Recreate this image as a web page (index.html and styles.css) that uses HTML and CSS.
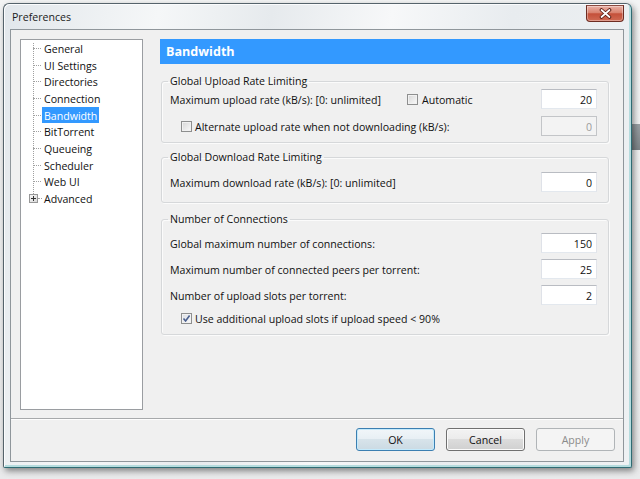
FILE: index.html
```html
<!DOCTYPE html>
<html lang="en">
<head>
    <meta charset="UTF-8">
    <meta name="viewport" content="width=device-width, initial-scale=1.0">
    <title>Preferences</title>
    <link rel="stylesheet" href="styles.css">
</head>
<body>

    <div class="behind"></div>

    <div class="window">
        <div class="titlebar">
            <span class="title">Preferences</span>
            <button class="close-btn" aria-label="Close">
                <svg width="13" height="11" viewBox="0 0 13 11">
                    <path d="M2.5 2 L10.5 9 M10.5 2 L2.5 9" stroke="#5b1d14" stroke-width="3.6" stroke-linecap="round"/>
                    <path d="M2.5 2 L10.5 9 M10.5 2 L2.5 9" stroke="#fff" stroke-width="1.7" stroke-linecap="round"/>
                </svg>
            </button>
        </div>

        <div class="client">
            <div class="main">
                <ul class="tree">
                    <li><span>General</span></li>
                    <li><span>UI Settings</span></li>
                    <li><span>Directories</span></li>
                    <li><span>Connection</span></li>
                    <li class="selected"><span>Bandwidth</span></li>
                    <li><span>BitTorrent</span></li>
                    <li><span>Queueing</span></li>
                    <li><span>Scheduler</span></li>
                    <li><span>Web UI</span></li>
                    <li class="expandable"><i class="expander"></i><span>Advanced</span></li>
                </ul>

                <div class="pane">
                    <div class="pane-title">Bandwidth</div>

                    <fieldset class="group group-upload">
                        <legend>Global Upload Rate Limiting</legend>
                        <div class="row row-auto">
                            <span class="text">Maximum upload rate (kB/s): [0: unlimited]</span>
                            <label class="check"><span class="box"></span><span class="text">Automatic</span></label>
                            <input class="field" type="text" value="20" readonly>
                        </div>
                        <div class="row">
                            <label class="check indent"><span class="box"></span><span class="text">Alternate upload rate when not downloading (kB/s):</span></label>
                            <input class="field" type="text" value="0" disabled>
                        </div>
                    </fieldset>

                    <fieldset class="group group-download">
                        <legend>Global Download Rate Limiting</legend>
                        <div class="row">
                            <span class="text">Maximum download rate (kB/s): [0: unlimited]</span>
                            <input class="field" type="text" value="0" readonly>
                        </div>
                    </fieldset>

                    <fieldset class="group group-connections">
                        <legend>Number of Connections</legend>
                        <div class="row">
                            <span class="text">Global maximum number of connections:</span>
                            <input class="field" type="text" value="150" readonly>
                        </div>
                        <div class="row">
                            <span class="text">Maximum number of connected peers per torrent:</span>
                            <input class="field" type="text" value="25" readonly>
                        </div>
                        <div class="row">
                            <span class="text">Number of upload slots per torrent:</span>
                            <input class="field" type="text" value="2" readonly>
                        </div>
                        <div class="row row-check">
                            <label class="check indent"><span class="box checked"></span><span class="text">Use additional upload slots if upload speed &lt; 90%</span></label>
                        </div>
                    </fieldset>
                </div>
            </div>

            <div class="footer">
                <button class="btn btn-default">OK</button>
                <button class="btn">Cancel</button>
                <button class="btn" disabled>Apply</button>
            </div>
        </div>
    </div>

</body>
</html>
```

FILE: styles.css
```css
* {
    box-sizing: border-box;
}
body {
    margin: 0;
    height: 479px;
    overflow: hidden;
    position: relative;
    background: linear-gradient(#f3f4f4, #e9eaeb);
    font-family: "Open Sans", "Noto Sans", sans-serif;
    font-size: 10.6px;
    color: #111;
}
.behind {
    position: absolute;
    left: 626px;
    top: 124px;
    width: 14px;
    height: 26px;
    background: linear-gradient(#9aa0a4, #7d8387);
}
.window {
    position: relative;
    margin: 3px 0 0 3px;
    width: 629px;
    height: 465px;
    display: flex;
    flex-direction: column;
    padding: 0 7px 5px 6px;
    border: 1px solid #55636b;
    border-right-color: #2f6b73;
    border-bottom-color: #2f6b73;
    border-radius: 6px 6px 2px 2px;
    background: linear-gradient(100deg, #e2e7eb 0%, #f5f7f8 22%, #e6eaed 38%, #f7f8f9 55%, #e8ecef 72%, #eef1f3 100%);
    box-shadow: inset 1px 1px 0 #fbfcfd, inset -2px -2px 0 #b5dcde, 2px 3px 6px rgba(0, 0, 0, 0.45);
}
.titlebar {
    height: 25px;
    display: flex;
    align-items: center;
    padding-left: 2px;
}
.title {
    font-size: 10.6px;
    color: #1b1b1b;
}
.close-btn {
    margin-left: auto;
    align-self: flex-start;
    margin-top: 1px;
    width: 38px;
    height: 17px;
    padding: 0;
    display: flex;
    align-items: center;
    justify-content: center;
    border: 1px solid #6d2c22;
    border-top-color: #8a4a40;
    border-radius: 0 0 4px 4px;
    background: linear-gradient(#eab1a6 0%, #d9826f 45%, #c4503a 52%, #cf6a53 100%);
    box-shadow: inset 0 0 0 1px rgba(255, 255, 255, 0.35);
}
.client {
    flex: 1;
    display: flex;
    flex-direction: column;
    background: #f0f0f0;
    border: 1px solid #8f969b;
}
.main {
    height: 388px;
    display: flex;
    align-items: flex-start;
    padding: 9px 0 0 9px;
}

/* tree */
.tree {
    position: relative;
    width: 123px;
    height: 371px;
    margin: 0;
    padding: 0;
    list-style: none;
    background: #fff;
    border: 1px solid #9a9da1;
}
.tree::before {
    content: '';
    position: absolute;
    left: 12px;
    top: 3px;
    height: 151px;
    border-left: 1px dotted #a0a0a0;
}
.tree li {
    position: relative;
    height: 16.67px;
    white-space: nowrap;
}
.tree li::before {
    content: '';
    position: absolute;
    left: 12px;
    top: 8px;
    width: 8px;
    border-top: 1px dotted #a0a0a0;
}
.tree li span {
    display: inline-block;
    margin-left: 21px;
    padding: 1px 2px 0;
    height: 16px;
    line-height: 16px;
}
.tree li.selected span {
    background: #3399ff;
    color: #fff;
}
.tree li.expandable::before {
    left: 17px;
    width: 4px;
}
.expander {
    position: absolute;
    left: 8px;
    top: 4px;
    width: 9px;
    height: 9px;
    border: 1px solid #979797;
    background: linear-gradient(135deg, #f6f6f6, #d9d9d9);
}
.expander::before,
.expander::after {
    content: '';
    position: absolute;
    background: #333;
}
.expander::before {
    left: 1px;
    top: 3px;
    width: 5px;
    height: 1px;
}
.expander::after {
    left: 3px;
    top: 1px;
    width: 1px;
    height: 5px;
}

/* settings pane */
.pane {
    width: 450px;
    margin-left: 17px;
}
.pane-title {
    height: 25px;
    padding-left: 6px;
    background: #3399ff;
    color: #fff;
    font-weight: 700;
    font-size: 12.6px;
    line-height: 25px;
}
.group {
    min-width: 0;
    margin: 7px 1px 0;
    padding: 0 11px 6px 8px;
    border: 1px solid #d6d8da;
    border-radius: 3px;
    box-shadow: inset 1px 1px 0 #fbfbfb, 1px 1px 0 #fbfbfb;
}
.group legend {
    padding: 0 2px;
    margin-left: -2px;
    line-height: 15px;
}
.group-upload {
    margin-top: 10px;
}
.group-download {
    padding-top: 7px;
    padding-bottom: 10px;
}
.group-connections {
    margin-top: 9px;
    padding-top: 6px;
    padding-bottom: 9px;
}
.row {
    display: flex;
    align-items: center;
    height: 20px;
}
.row + .row {
    margin-top: 7px;
}
.group-connections .row + .row {
    margin-top: 6px;
}
.row-auto {
    display: grid;
    grid-template-columns: 237px 1fr 56px;
}
.row-check {
    height: 14px;
}
.text {
    padding-top: 2px;
}
.field {
    margin-left: auto;
    width: 56px;
    height: 20px;
    padding: 1px 4px 0;
    text-align: right;
    font: inherit;
    color: #111;
    background: #fff;
    border: 1px solid;
    border-color: #b9bcc2 #e2e4ea #e3e8ee #dfe2e8;
    outline: none;
}
.field:disabled {
    background: #f3f3f3;
    color: #9c9c9c;
    border-color: #c3c5c8;
}
.check {
    display: flex;
    align-items: center;
    gap: 4px;
}
.check.indent {
    margin-left: 11px;
    gap: 3px;
}
.box {
    width: 11px;
    height: 11px;
    border: 1px solid #8e8f8f;
    background: linear-gradient(135deg, #d6d6d6, #fafafa);
    box-shadow: inset 0 0 0 1px #f1f1f1;
}
.box.checked {
    background: url("data:image/svg+xml,%3Csvg xmlns='http://www.w3.org/2000/svg' width='9' height='9'%3E%3Cpath d='M1.5 4.5 L3.6 7 L7.6 1.6' fill='none' stroke='%234a5f8e' stroke-width='1.6'/%3E%3C/svg%3E") center no-repeat, linear-gradient(135deg, #dadde3, #fafafa);
}

/* buttons */
.footer {
    height: 43px;
    display: flex;
    justify-content: flex-end;
    align-items: flex-start;
    gap: 11px;
    padding: 9px 8px 0 0;
    border-top: 1px solid #a7a9ab;
    box-shadow: inset 0 1px 0 #fdfdfd;
}
.btn {
    width: 79px;
    height: 23px;
    font: inherit;
    color: #111;
    border: 1px solid #707070;
    border-radius: 3px;
    background: linear-gradient(#f3f3f3 0%, #ebebeb 50%, #dcdcdc 50%, #d0d0d0 100%);
    box-shadow: inset 0 0 0 1px #fbfbfb;
}
.btn-default {
    border-color: #3c7fb1;
    background: linear-gradient(#f1f6f9 0%, #e7eff4 50%, #d7e3ea 50%, #cbdae3 100%);
    box-shadow: inset 0 0 0 1px #c4eafc;
}
.btn:disabled {
    color: #8b8b8b;
    border-color: #b0b4b7;
    background: #f4f4f4;
    box-shadow: none;
}
```
